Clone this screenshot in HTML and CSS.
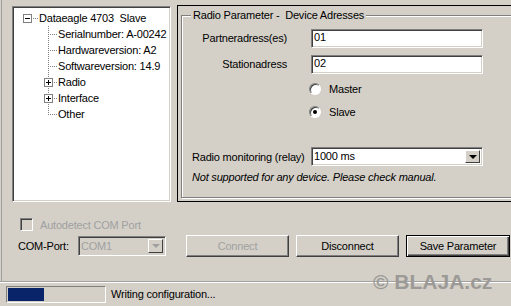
FILE: index.html
```html
<!DOCTYPE html>
<html lang="en">
<head>
  <meta charset="UTF-8">
  <title>Dataeagle Configuration</title>
  <link rel="stylesheet" href="styles.css">
</head>
<body>
  <div class="window">
    <div class="main">
      <div class="top">
        <div class="tree">
          <div class="node">
            <svg width="25" height="16">
              <rect x="9.5" y="4.5" width="8" height="8" fill="#fff" stroke="#808080"/>
              <line x1="11" y1="8.5" x2="16" y2="8.5" stroke="#000"/>
              <line x1="19" y1="8.5" x2="25" y2="8.5" stroke="#808080" stroke-dasharray="1 1"/>
            </svg>
            <span class="label">Dataeagle 4703  Slave</span>
          </div>
          <div class="node">
            <svg width="44" height="16">
              <line x1="34.5" y1="0" x2="34.5" y2="16" stroke="#808080" stroke-dasharray="1 1"/>
              <line x1="36" y1="8.5" x2="44" y2="8.5" stroke="#808080" stroke-dasharray="1 1"/>
            </svg>
            <span class="label">Serialnumber: A-00242</span>
          </div>
          <div class="node">
            <svg width="44" height="16">
              <line x1="34.5" y1="0" x2="34.5" y2="16" stroke="#808080" stroke-dasharray="1 1"/>
              <line x1="36" y1="8.5" x2="44" y2="8.5" stroke="#808080" stroke-dasharray="1 1"/>
            </svg>
            <span class="label">Hardwareversion: A2</span>
          </div>
          <div class="node">
            <svg width="44" height="16">
              <line x1="34.5" y1="0" x2="34.5" y2="16" stroke="#808080" stroke-dasharray="1 1"/>
              <line x1="36" y1="8.5" x2="44" y2="8.5" stroke="#808080" stroke-dasharray="1 1"/>
            </svg>
            <span class="label">Softwareversion: 14.9</span>
          </div>
          <div class="node">
            <svg width="44" height="16">
              <line x1="34.5" y1="0" x2="34.5" y2="16" stroke="#808080" stroke-dasharray="1 1"/>
              <rect x="30.5" y="4.5" width="8" height="8" fill="#fff" stroke="#808080"/>
              <line x1="32" y1="8.5" x2="37" y2="8.5" stroke="#000"/>
              <line x1="34.5" y1="6" x2="34.5" y2="11" stroke="#000"/>
              <line x1="40" y1="8.5" x2="44" y2="8.5" stroke="#808080" stroke-dasharray="1 1"/>
            </svg>
            <span class="label">Radio</span>
          </div>
          <div class="node">
            <svg width="44" height="16">
              <line x1="34.5" y1="0" x2="34.5" y2="16" stroke="#808080" stroke-dasharray="1 1"/>
              <rect x="30.5" y="4.5" width="8" height="8" fill="#fff" stroke="#808080"/>
              <line x1="32" y1="8.5" x2="37" y2="8.5" stroke="#000"/>
              <line x1="34.5" y1="6" x2="34.5" y2="11" stroke="#000"/>
              <line x1="40" y1="8.5" x2="44" y2="8.5" stroke="#808080" stroke-dasharray="1 1"/>
            </svg>
            <span class="label">Interface</span>
          </div>
          <div class="node">
            <svg width="44" height="16">
              <line x1="34.5" y1="0" x2="34.5" y2="9" stroke="#808080" stroke-dasharray="1 1"/>
              <line x1="36" y1="8.5" x2="44" y2="8.5" stroke="#808080" stroke-dasharray="1 1"/>
            </svg>
            <span class="label">Other</span>
          </div>
        </div>

        <div class="panel">
          <div class="group">
            <div class="group-title">Radio Parameter -  Device Adresses</div>
            <div class="form-grid">
              <label class="field-label">Partneradress(es)</label>
              <div class="textbox">01</div>
              <label class="field-label">Stationadress</label>
              <div class="textbox">02</div>
              <div></div>
              <div class="radio-row"><span class="radio"></span>Master</div>
              <div></div>
              <div class="radio-row"><span class="radio checked"></span>Slave</div>
            </div>
            <div class="monitor-row">
              <label class="monitor-label">Radio monitoring (relay)</label>
              <div class="combo">
                <span class="combo-value">1000 ms</span>
                <span class="combo-button"><span class="arrow"></span></span>
              </div>
            </div>
            <p class="note">Not supported for any device. Please check manual.</p>
          </div>
        </div>
      </div>

      <div class="controls">
        <div class="check-row">
          <span class="checkbox"></span>
          <span class="disabled-text">Autodetect COM Port</span>
        </div>
        <div class="port-row">
          <span class="port-label">COM-Port:</span>
          <div class="combo combo-disabled">
            <span class="combo-value">COM1</span>
            <span class="combo-button"><span class="arrow"></span></span>
          </div>
          <button class="btn btn-disabled">Connect</button>
          <button class="btn">Disconnect</button>
          <button class="btn btn-default">Save Parameter</button>
        </div>
      </div>
    </div>

    <div class="statusbar">
      <div class="progress"><div class="progress-fill" style="width: 36px"></div></div>
      <span class="status-text">Writing configuration...</span>
    </div>

    <div class="watermark">© BLAJA.cz</div>
  </div>
</body>
</html>
```

FILE: styles.css
```css
body {
  margin: 0;
  padding: 0;
  background-color: #d4d0c8;
}

.window {
  position: relative;
  width: 511px;
  height: 306px;
  overflow: hidden;
  background-color: #d4d0c8;
  font-family: "Liberation Sans", Arial, sans-serif;
  font-size: 11px;
  letter-spacing: -0.2px;
  color: #000;
}

.main {
  height: 281px;
  margin-left: 1px;
  border-left: 1px solid #a0a0a0;
}

.top {
  display: flex;
  padding-top: 5px;
  height: 197px;
}

/* tree view */
.tree {
  flex-shrink: 0;
  width: 159px;
  height: 196px;
  margin-top: 1px;
  margin-left: 10px;
  box-sizing: border-box;
  padding-top: 3px;
  background-color: #fff;
  border: 1px solid;
  border-color: #808080 #fff #fff #808080;
  box-shadow: inset 1px 1px 0 #404040, inset -1px -1px 0 #d4d0c8;
}

.node {
  display: flex;
  align-items: center;
  height: 16px;
  padding-left: 1px;
}

.node svg {
  flex-shrink: 0;
  display: block;
  shape-rendering: crispEdges;
}

.node .label {
  white-space: pre;
  line-height: 16px;
}

/* right panel */
.panel {
  flex-shrink: 0;
  width: 345px;
  height: 197px;
  margin-left: 6px;
  box-sizing: border-box;
  border: 1px solid #000;
  padding-top: 9px;
  padding-left: 3px;
}

.group {
  height: 183px;
  box-sizing: border-box;
  border: 1px solid #808080;
  box-shadow: inset 1px 1px 0 #fff, 1px 1px 0 #fff;
}

.group-title {
  width: fit-content;
  margin-top: -8px;
  margin-left: 9px;
  padding: 0 2px;
  line-height: 14px;
  background-color: #d4d0c8;
  white-space: pre;
}

.form-grid {
  display: grid;
  grid-template-columns: 129px 172px;
  row-gap: 7px;
  margin-top: 7px;
}

.field-label {
  text-align: right;
  padding-right: 24px;
  line-height: 19px;
}

.textbox {
  height: 19px;
  box-sizing: border-box;
  padding-left: 2px;
  line-height: 15px;
  background-color: #fff;
  border: 1px solid;
  border-color: #808080 #fff #fff #808080;
  box-shadow: inset 1px 1px 0 #404040, inset -1px -1px 0 #d4d0c8;
}

.radio-row {
  display: flex;
  align-items: center;
  height: 16px;
}

.radio {
  position: relative;
  width: 12px;
  height: 12px;
  margin-left: -2px;
  margin-right: 8px;
  box-sizing: border-box;
  border-radius: 50%;
  background-color: #fff;
  border: 1px solid;
  border-color: #808080 #fff #fff #808080;
  box-shadow: inset 1px 1px 0 #404040;
}

.radio.checked::after {
  content: "";
  position: absolute;
  left: 3px;
  top: 3px;
  width: 4px;
  height: 4px;
  border-radius: 50%;
  background-color: #000;
}

.monitor-row {
  display: flex;
  align-items: center;
  margin-top: 27px;
}

.monitor-label {
  width: 119px;
  padding-left: 10px;
}

.combo {
  display: flex;
  width: 172px;
  height: 19px;
  box-sizing: border-box;
  background-color: #fff;
  border: 1px solid;
  border-color: #808080 #fff #fff #808080;
  box-shadow: inset 1px 1px 0 #404040, inset -1px -1px 0 #d4d0c8;
  padding: 2px;
}

.combo-value {
  flex: 1;
  line-height: 13px;
}

.combo-button {
  display: flex;
  align-items: center;
  justify-content: center;
  width: 15px;
  height: 13px;
  box-sizing: border-box;
  background-color: #d4d0c8;
  border: 1px solid;
  border-color: #fff #404040 #404040 #fff;
}

.arrow {
  width: 0;
  height: 0;
  border-left: 4px solid transparent;
  border-right: 4px solid transparent;
  border-top: 4px solid #000;
}

.note {
  margin: 5px 0 0 10px;
  font-style: italic;
  line-height: 13px;
}

/* bottom controls */
.controls {
  padding-left: 16px;
}

.check-row {
  display: flex;
  align-items: center;
  height: 13px;
  margin-top: 16px;
}

.checkbox {
  width: 13px;
  height: 13px;
  margin-left: 2px;
  margin-right: 7px;
  box-sizing: border-box;
  background-color: #d4d0c8;
  border: 1px solid;
  border-color: #808080 #fff #fff #808080;
  box-shadow: inset 1px 1px 0 #404040;
}

.disabled-text {
  color: #a0a0a0;
}

.port-row {
  display: flex;
  align-items: center;
  margin-top: 4px;
  height: 22px;
}

.port-label {
  width: 60px;
}

.combo-disabled {
  width: 88px;
  height: 20px;
  background-color: #d4d0c8;
  color: #a0a0a0;
}

.combo-disabled .combo-value {
  line-height: 14px;
}

.combo-disabled .combo-button {
  height: 14px;
}

.combo-disabled .arrow {
  border-top-color: #a0a0a0;
}

.btn {
  flex-shrink: 0;
  width: 103px;
  height: 22px;
  margin-left: 7px;
  padding: 0;
  box-sizing: border-box;
  font-family: inherit;
  font-size: 11px;
  letter-spacing: -0.2px;
  color: #000;
  background-color: #d4d0c8;
  border: 1px solid;
  border-color: #fff #404040 #404040 #fff;
  box-shadow: inset -1px -1px 0 #808080;
}

.btn-disabled {
  margin-left: 20px;
  color: #a0a0a0;
}

.btn-default {
  width: 104px;
  border: 1px solid #000;
  box-shadow: inset 1px 1px 0 #fff, inset -1px -1px 0 #404040, inset -2px -2px 0 #808080;
}

/* status bar */
.statusbar {
  display: flex;
  align-items: center;
  height: 25px;
  box-sizing: border-box;
  border-top: 1px solid #a0a0a0;
  box-shadow: inset 0 1px 0 #fff;
  padding-left: 6px;
}

.progress {
  width: 100px;
  height: 17px;
  box-sizing: border-box;
  border: 1px solid;
  border-color: #808080 #fff #fff #808080;
  padding: 1px;
}

.progress-fill {
  height: 13px;
  background-color: #0a246a;
}

.status-text {
  margin-left: 5px;
}

.watermark {
  position: absolute;
  left: 373px;
  top: 270px;
  font-size: 21px;
  font-weight: bold;
  color: #9c9a96;
  letter-spacing: 0;
}
```
